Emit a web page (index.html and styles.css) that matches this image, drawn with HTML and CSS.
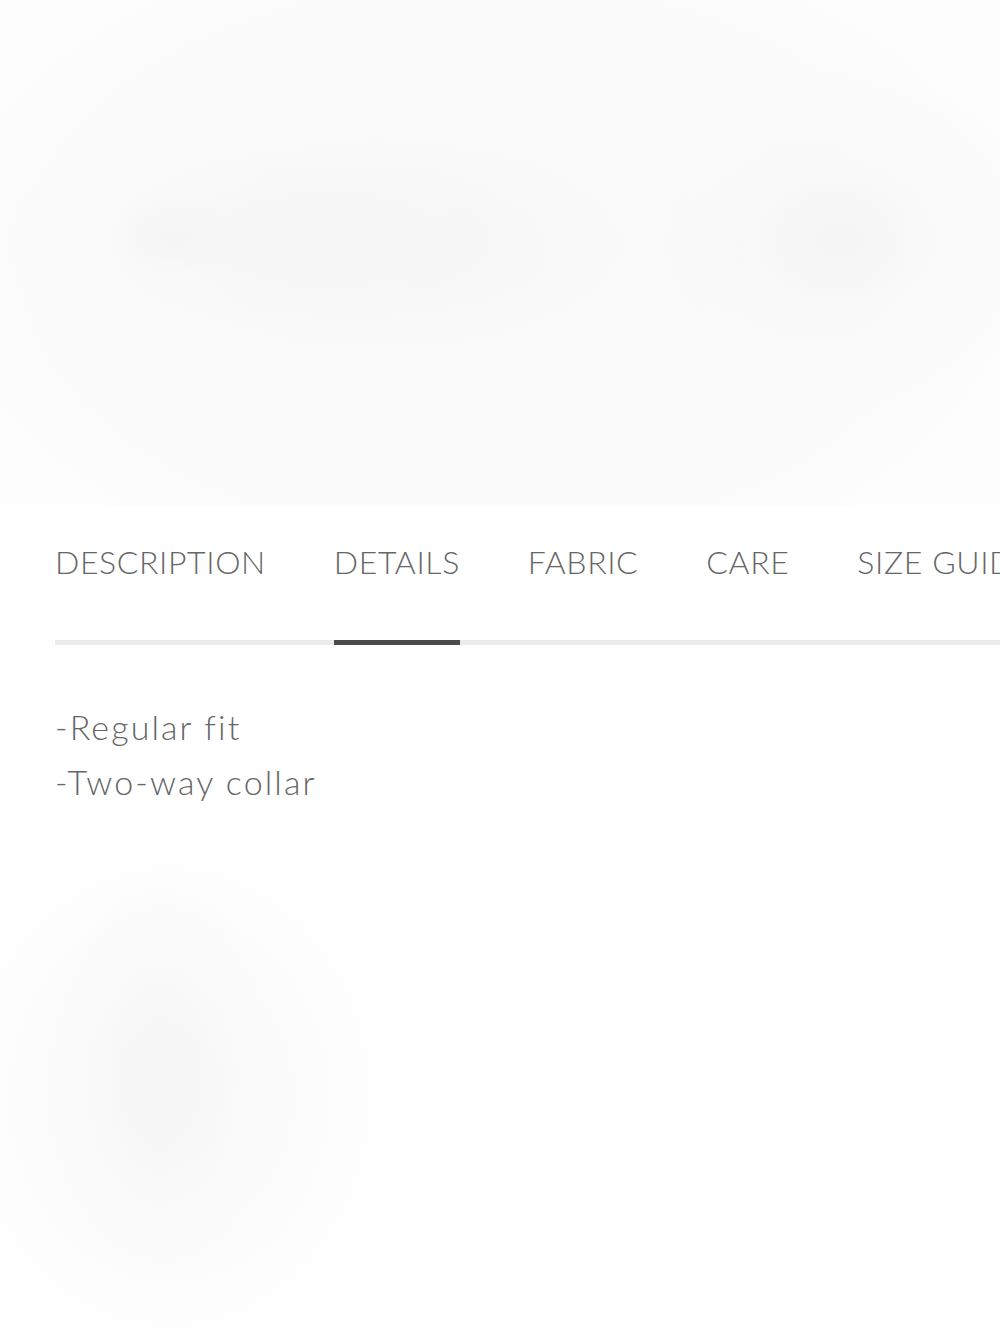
FILE: index.html
```html
<!DOCTYPE html>
<html lang="en">
<head>
<meta charset="utf-8">
<title>Product details</title>
<link rel="stylesheet" href="styles.css">
</head>
<body>
<div class="hero" aria-hidden="true"></div>
<nav class="tabs">
  <div class="tab-row">
    <span class="tab">DESCRIPTION</span>
    <span class="tab active">DETAILS</span>
    <span class="tab">FABRIC</span>
    <span class="tab">CARE</span>
    <span class="tab">SIZE GUIDE</span>
  </div>
</nav>
<section class="panel">
  <p class="line">-Regular fit</p>
  <p class="line">-Two-way collar</p>
</section>
<div class="photo" aria-hidden="true"></div>
</body>
</html>
```
FILE: styles.css
```css
html, body {
  margin: 0;
  padding: 0;
  background: #ffffff;
}
body {
  width: 1000px;
  height: 1333px;
  overflow: hidden;
  font-family: "Lato", "Liberation Sans", sans-serif;
  color: #666666;
}
.hero {
  height: 505px;
  background:
    radial-gradient(ellipse 60px 40px at 175px 237px, #f5f5f6 0%, rgba(245,245,246,0) 100%),
    radial-gradient(ellipse 70px 60px at 840px 240px, #f5f5f6 0%, rgba(245,245,246,0) 100%),
    radial-gradient(ellipse 330px 130px at 330px 240px, #f6f6f7 0%, rgba(247,247,248,0) 100%),
    radial-gradient(ellipse 220px 170px at 830px 240px, #f7f7f8 0%, rgba(247,247,248,0) 100%),
    radial-gradient(ellipse 560px 340px at 480px 260px, #f9f9fa 0%, #fbfbfb 70%, #fdfdfd 100%);
}
.tabs {
  padding-left: 55px;
  overflow: hidden;
  padding-top: 37px;
}
.tab-row {
  display: flex;
  gap: 68px;
  white-space: nowrap;
  border-bottom: 5px solid #ebebeb;
  width: 1200px;
}
.tab {
  font-size: 32px;
  font-weight: 300;
  line-height: 40px;
  padding-bottom: 58px;
  margin-bottom: -5px;
  border-bottom: 5px solid transparent;
  letter-spacing: 0.6px;
  color: #666666;
}
.tab.active {
  border-bottom-color: #4b4b4b;
}
.panel {
  padding: 54px 55px 0;
}
.line {
  margin: 0;
  font-size: 34px;
  font-weight: 300;
  line-height: 55px;
  letter-spacing: 2.1px;
  color: #666666;
}
.photo {
  margin-top: 28px;
  width: 460px;
  height: 510px;
  background:
    radial-gradient(ellipse 110px 200px at 160px 240px, #f6f6f7 0%, rgba(246,246,247,0) 100%),
    radial-gradient(ellipse 260px 300px at 170px 260px, #f9f9fa 0%, rgba(250,250,250,0) 100%);
}
```
